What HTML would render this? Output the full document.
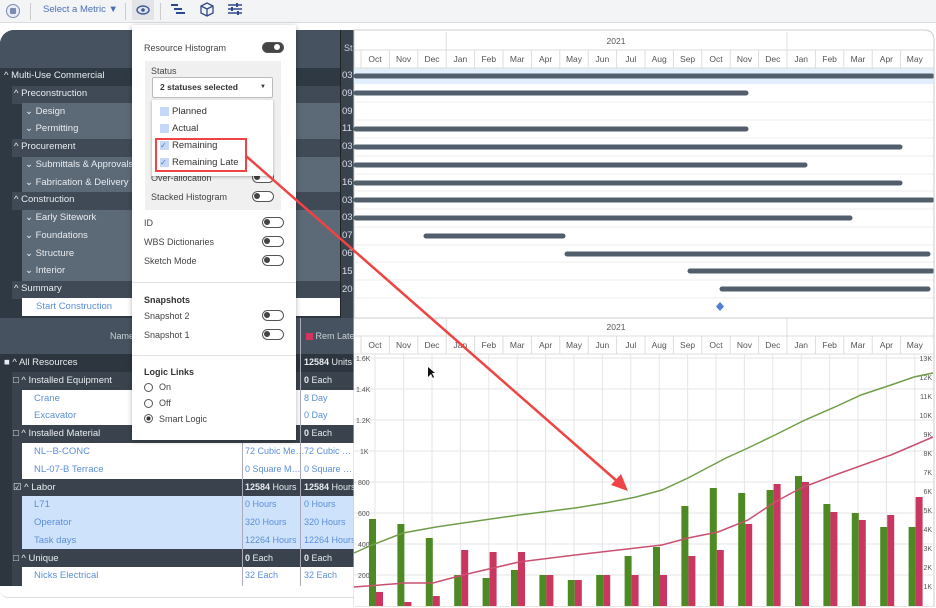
<!DOCTYPE html>
<html><head><meta charset="utf-8"><style>
*{margin:0;padding:0;box-sizing:border-box}
body{width:936px;height:608px;overflow:hidden;background:#fff;font-family:"Liberation Sans",sans-serif;position:relative;font-size:9px}
.a{position:absolute}
.tb{left:0;top:0;width:936px;height:23px;background:#f3f4f6;border-bottom:1px solid #dcdde0}
.row{position:absolute;height:17.8px;line-height:17.8px;color:#e8ecf0;white-space:nowrap;font-size:9.5px}
.lnk{color:#5b8fd8}
.tog{position:absolute;width:22px;height:11px;border-radius:6px;border:1.5px solid #555;background:#fff}
.tog:after{content:"";position:absolute;left:1px;top:1px;width:6px;height:6px;border-radius:50%;background:#444}
.tog.on{background:#444}
.tog.on:after{left:11px;background:#fff}
.pl{position:absolute;color:#444;font-size:9px}
</style></head><body>
<div class="a tb"></div>
<div class="a" style="left:6px;top:4px;width:14px;height:14px;border:1.5px solid #7b8ab0;border-radius:50%;background:#e8ecf6"></div>
<div class="a" style="left:10px;top:8px;width:6px;height:6px;background:#7b8ab0;border-radius:1px"></div>
<div class="a" style="left:30px;top:3px;width:1px;height:17px;background:#ccc"></div>
<div class="a" style="left:43px;top:4px;color:#4a6fb5;font-size:9.5px">Select a Metric &#9660;</div>
<div class="a" style="left:125px;top:3px;width:1px;height:17px;background:#ccc"></div>
<div class="a" style="left:132px;top:0;width:22px;height:20px;background:#e2e4e8"></div>
<svg class="a" style="left:136px;top:4px" width="14" height="12"><ellipse cx="7" cy="6" rx="6" ry="4" fill="none" stroke="#3a5a99" stroke-width="1.4"/><circle cx="7" cy="6" r="1.8" fill="#3a5a99"/></svg>
<div class="a" style="left:160px;top:3px;width:1px;height:17px;background:#ccc"></div>
<svg class="a" style="left:170px;top:3px" width="16" height="14"><g stroke="#2f4a8a" stroke-width="2"><line x1="1" y1="2" x2="8" y2="2"/><line x1="4" y1="6" x2="12" y2="6"/><line x1="6" y1="10" x2="15" y2="10"/></g></svg>
<svg class="a" style="left:200px;top:2px" width="14" height="15"><path d="M7 1 L13 4 L13 11 L7 14 L1 11 L1 4 Z M1 4 L7 7 L13 4 M7 7 L7 14" fill="none" stroke="#2f4a8a" stroke-width="1.3"/></svg>
<svg class="a" style="left:227px;top:2px" width="16" height="15"><g stroke="#2f4a8a" stroke-width="1.5"><line x1="1" y1="3" x2="15" y2="3"/><line x1="1" y1="7" x2="15" y2="7"/><line x1="1" y1="11" x2="15" y2="11"/></g><g fill="#2f4a8a"><rect x="9" y="1" width="2" height="4"/><rect x="4" y="5" width="2" height="4"/><rect x="10" y="9" width="2" height="4"/></g></svg>

<!-- upper left table -->
<div class="a" style="left:0;top:30px;width:355px;height:288px;background:#2f3944;border-top-left-radius:14px;overflow:hidden">
 <div class="a" style="left:0;top:0;width:340px;height:38px;background:#46525f"></div>
 <div class="a" style="left:0;top:13px;width:340px;text-align:center;color:#c9d0d8">ID - Description</div>
 <div class="a" style="left:340px;top:0;width:15px;height:288px;background:#39434e;border-left:1px solid #222"></div>
 <div class="a" style="left:344px;top:13px;color:#c9d0d8">St</div>
</div>
<div class="a" style="left:12px;top:86px;width:328px;height:18px;background:#3f4a56"></div>
<div class="a" style="left:22px;top:103px;width:318px;height:36px;background:#5c6977"></div>
<div class="a" style="left:12px;top:139px;width:328px;height:18px;background:#3f4a56"></div>
<div class="a" style="left:22px;top:157px;width:318px;height:36px;background:#5c6977"></div>
<div class="a" style="left:12px;top:192px;width:328px;height:18px;background:#3f4a56"></div>
<div class="a" style="left:22px;top:210px;width:318px;height:71px;background:#5c6977"></div>
<div class="a" style="left:12px;top:281px;width:328px;height:18px;background:#3f4a56"></div>
<div class="a" style="left:22px;top:298px;width:318px;height:18px;background:#fff"></div>
<div class="row" style="left:4px;top:67px">^ Multi-Use Commercial</div>
<div class="row" style="left:14px;top:85px">^ Preconstruction</div>
<div class="row" style="left:25px;top:103px">&#8964; Design</div>
<div class="row" style="left:25px;top:120px">&#8964; Permitting</div>
<div class="row" style="left:14px;top:138px">^ Procurement</div>
<div class="row" style="left:25px;top:156px">&#8964; Submittals &amp; Approvals</div>
<div class="row" style="left:25px;top:174px">&#8964; Fabrication &amp; Delivery</div>
<div class="row" style="left:14px;top:191px">^ Construction</div>
<div class="row" style="left:25px;top:209px">&#8964; Early Sitework</div>
<div class="row" style="left:25px;top:227px">&#8964; Foundations</div>
<div class="row" style="left:25px;top:245px">&#8964; Structure</div>
<div class="row" style="left:25px;top:262px">&#8964; Interior</div>
<div class="row" style="left:14px;top:280px">^ Summary</div>
<div class="row lnk" style="left:36px;top:298px">Start Construction</div>
<div class="a" style="left:342px;top:67px;color:#dde;line-height:17.8px;font-size:9.5px">03<br>09<br>09<br>11<br>03<br>03<br>16<br>03<br>03<br>07<br>06<br>15<br>20</div>

<!-- lower left table -->
<div class="a" style="left:0;top:318px;width:355px;height:270px;background:#2d353e"></div>
<div class="a" style="left:0;top:318px;width:355px;height:36px;background:#46525f"></div>
<div class="a" style="left:110px;top:331px;color:#c9d0d8">Name</div>
<div class="a" style="left:306px;top:331px;color:#c9d0d8"><span style="display:inline-block;width:7px;height:7px;background:#d6345f;vertical-align:-1px"></span> Rem Late</div>
<div class="a" style="left:12px;top:372px;width:343px;height:214px;background:#3a434d"></div>
<div class="a" style="left:22px;top:390px;width:333px;height:35px;background:#fff"></div>
<div class="a" style="left:22px;top:443px;width:333px;height:36px;background:#fff"></div>
<div class="a" style="left:22px;top:496px;width:333px;height:53px;background:#cfe2fb"></div>
<div class="a" style="left:22px;top:567px;width:333px;height:19px;background:#fff"></div>
<div class="a" style="left:242px;top:443px;width:1px;height:143px;background:#aab"></div>
<div class="a" style="left:300px;top:318px;width:1px;height:268px;background:#aab"></div>
<div class="a" style="left:0;top:586px;width:355px;height:12px;background:#fff;border-bottom:1px solid #ddd;border-bottom-left-radius:8px"></div>
<div class="row" style="left:4px;top:354px">&#9632; ^ All Resources</div>
<div class="row" style="left:13px;top:372px">&#9633; ^ Installed Equipment</div>
<div class="row lnk" style="left:34px;top:390px">Crane</div>
<div class="row lnk" style="left:34px;top:407px">Excavator</div>
<div class="row" style="left:13px;top:425px">&#9633; ^ Installed Material</div>
<div class="row lnk" style="left:34px;top:443px">NL--B-CONC</div>
<div class="row lnk" style="left:34px;top:461px">NL-07-B Terrace</div>
<div class="row" style="left:13px;top:479px">&#9745; ^ Labor</div>
<div class="row lnk" style="left:34px;top:496px">L71</div>
<div class="row lnk" style="left:34px;top:514px">Operator</div>
<div class="row lnk" style="left:34px;top:532px">Task days</div>
<div class="row" style="left:13px;top:550px">&#9633; ^ Unique</div>
<div class="row lnk" style="left:34px;top:567px">Nicks Electrical</div>
<div class="row lnk" style="left:245px;top:443px;font-size:9px">72 Cubic Me…</div>
<div class="row lnk" style="left:245px;top:461px;font-size:9px">0 Square M…</div>
<div class="row" style="left:245px;top:479px;font-size:9px"><b>12584</b> Hours</div>
<div class="row lnk" style="left:245px;top:496px;font-size:9px">0 Hours</div>
<div class="row lnk" style="left:245px;top:514px;font-size:9px">320 Hours</div>
<div class="row lnk" style="left:245px;top:532px;font-size:9px">12264 Hours</div>
<div class="row" style="left:245px;top:550px;font-size:9px"><b>0</b> Each</div>
<div class="row lnk" style="left:245px;top:567px;font-size:9px">32 Each</div>
<div class="row" style="left:304px;top:354px;font-size:9px"><b>12584</b> Units</div>
<div class="row" style="left:304px;top:372px;font-size:9px"><b>0</b> Each</div>
<div class="row lnk" style="left:304px;top:390px;font-size:9px">8 Day</div>
<div class="row lnk" style="left:304px;top:407px;font-size:9px">0 Day</div>
<div class="row" style="left:304px;top:425px;font-size:9px"><b>0</b> Each</div>
<div class="row lnk" style="left:304px;top:443px;font-size:9px">72 Cubic …</div>
<div class="row lnk" style="left:304px;top:461px;font-size:9px">0 Square …</div>
<div class="row" style="left:304px;top:479px;font-size:9px"><b>12584</b> Hours</div>
<div class="row lnk" style="left:304px;top:496px;font-size:9px">0 Hours</div>
<div class="row lnk" style="left:304px;top:514px;font-size:9px">320 Hours</div>
<div class="row lnk" style="left:304px;top:532px;font-size:9px">12264 Hours</div>
<div class="row" style="left:304px;top:550px;font-size:9px"><b>0</b> Each</div>
<div class="row lnk" style="left:304px;top:567px;font-size:9px">32 Each</div>

<!-- right side svg -->
<svg class="a" style="left:0;top:0" width="936" height="608" font-family="Liberation Sans" font-size="8.5">
<path d="M354 30 L924 30 Q934 30 934 40 L934 606 L354 606 Z" fill="#fff" stroke="#ccc"/>
<rect x="354" y="68" width="579" height="16" fill="#e3eefc"/>
<g stroke="#eee"><line x1="354" y1="102" x2="934" y2="102"/><line x1="354" y1="120" x2="934" y2="120"/><line x1="354" y1="138" x2="934" y2="138"/><line x1="354" y1="156" x2="934" y2="156"/><line x1="354" y1="174" x2="934" y2="174"/><line x1="354" y1="191" x2="934" y2="191"/><line x1="354" y1="209" x2="934" y2="209"/><line x1="354" y1="227" x2="934" y2="227"/><line x1="354" y1="245" x2="934" y2="245"/><line x1="354" y1="262" x2="934" y2="262"/><line x1="354" y1="280" x2="934" y2="280"/><line x1="354" y1="298" x2="934" y2="298"/></g>
<g id="hdr">
<line x1="354" y1="50" x2="934" y2="50" stroke="#ddd"/><line x1="354" y1="68" x2="934" y2="68" stroke="#ddd"/>
<line x1="446.2" y1="32" x2="446.2" y2="50" stroke="#ddd"/><line x1="787" y1="32" x2="787" y2="50" stroke="#ddd"/>
<text x="616" y="44" fill="#555" text-anchor="middle">2021</text>
<g stroke="#ddd"><line x1="361" y1="50" x2="361" y2="68"/><line x1="389.4" y1="50" x2="389.4" y2="68"/><line x1="417.8" y1="50" x2="417.8" y2="68"/><line x1="446.2" y1="50" x2="446.2" y2="68"/><line x1="474.6" y1="50" x2="474.6" y2="68"/><line x1="503" y1="50" x2="503" y2="68"/><line x1="531.4" y1="50" x2="531.4" y2="68"/><line x1="559.8" y1="50" x2="559.8" y2="68"/><line x1="588.2" y1="50" x2="588.2" y2="68"/><line x1="616.6" y1="50" x2="616.6" y2="68"/><line x1="645" y1="50" x2="645" y2="68"/><line x1="673.4" y1="50" x2="673.4" y2="68"/><line x1="701.8" y1="50" x2="701.8" y2="68"/><line x1="730.2" y1="50" x2="730.2" y2="68"/><line x1="758.6" y1="50" x2="758.6" y2="68"/><line x1="787" y1="50" x2="787" y2="68"/><line x1="815.4" y1="50" x2="815.4" y2="68"/><line x1="843.8" y1="50" x2="843.8" y2="68"/><line x1="872.2" y1="50" x2="872.2" y2="68"/><line x1="900.6" y1="50" x2="900.6" y2="68"/></g>
<g fill="#555" text-anchor="middle"><text x="375" y="62">Oct</text><text x="403.6" y="62">Nov</text><text x="432" y="62">Dec</text><text x="460.4" y="62">Jan</text><text x="488.8" y="62">Feb</text><text x="517.2" y="62">Mar</text><text x="545.6" y="62">Apr</text><text x="574" y="62">May</text><text x="602.4" y="62">Jun</text><text x="630.8" y="62">Jul</text><text x="659.2" y="62">Aug</text><text x="687.6" y="62">Sep</text><text x="716" y="62">Oct</text><text x="744.4" y="62">Nov</text><text x="772.8" y="62">Dec</text><text x="801.2" y="62">Jan</text><text x="829.6" y="62">Feb</text><text x="858" y="62">Mar</text><text x="886.4" y="62">Apr</text><text x="914.8" y="62">May</text></g>
</g>
<g stroke="#525e6c" stroke-width="5" stroke-linecap="round">
<line x1="356" y1="76" x2="932" y2="76"/><line x1="356" y1="93" x2="746" y2="93"/><line x1="356" y1="129" x2="746" y2="129"/><line x1="356" y1="147" x2="900" y2="147"/><line x1="356" y1="165" x2="805" y2="165"/><line x1="356" y1="183" x2="900" y2="183"/><line x1="356" y1="200" x2="932" y2="200"/><line x1="356" y1="218" x2="850" y2="218"/><line x1="426" y1="236" x2="563" y2="236"/><line x1="567" y1="254" x2="928" y2="254"/><line x1="690" y1="271" x2="932" y2="271"/><line x1="722" y1="289" x2="928" y2="289"/></g>
<path d="M720 302 L724 306.5 L720 311 L716 306.5 Z" fill="#4f7fd6"/>
<!-- bottom chart -->
<rect x="354" y="318" width="579" height="288" fill="#fff"/>
<line x1="354" y1="318" x2="934" y2="318" stroke="#ccc"/>
<g transform="translate(0,286)"><use href="#hdr"/></g>
<g stroke="#e6e6e6"><line x1="354" y1="358" x2="934" y2="358"/><line x1="354" y1="389" x2="934" y2="389"/><line x1="354" y1="420" x2="934" y2="420"/><line x1="354" y1="451" x2="934" y2="451"/><line x1="354" y1="482" x2="934" y2="482"/><line x1="354" y1="513" x2="934" y2="513"/><line x1="354" y1="544" x2="934" y2="544"/><line x1="354" y1="575" x2="934" y2="575"/>
<line x1="375" y1="354" x2="375" y2="606"/><line x1="403.6" y1="354" x2="403.6" y2="606"/><line x1="432" y1="354" x2="432" y2="606"/><line x1="460.4" y1="354" x2="460.4" y2="606"/><line x1="488.8" y1="354" x2="488.8" y2="606"/><line x1="517.2" y1="354" x2="517.2" y2="606"/><line x1="545.6" y1="354" x2="545.6" y2="606"/><line x1="574" y1="354" x2="574" y2="606"/><line x1="602.4" y1="354" x2="602.4" y2="606"/><line x1="630.8" y1="354" x2="630.8" y2="606"/><line x1="659.2" y1="354" x2="659.2" y2="606"/><line x1="687.6" y1="354" x2="687.6" y2="606"/><line x1="716" y1="354" x2="716" y2="606"/><line x1="744.4" y1="354" x2="744.4" y2="606"/><line x1="772.8" y1="354" x2="772.8" y2="606"/><line x1="801.2" y1="354" x2="801.2" y2="606"/><line x1="829.6" y1="354" x2="829.6" y2="606"/><line x1="858" y1="354" x2="858" y2="606"/><line x1="886.4" y1="354" x2="886.4" y2="606"/><line x1="914.8" y1="354" x2="914.8" y2="606"/></g>
<g font-size="7" fill="#555"><text x="356" y="361">1.6K</text><text x="356" y="392">1.4K</text><text x="356" y="423">1.2K</text><text x="360" y="454">1K</text><text x="358" y="485">800</text><text x="358" y="516">600</text><text x="358" y="547">400</text><text x="358" y="578">200</text>
<g text-anchor="end"><text x="932" y="361">13K</text><text x="932" y="380">12K</text><text x="932" y="399">11K</text><text x="932" y="418">10K</text><text x="932" y="437">9K</text><text x="932" y="456">8K</text><text x="932" y="475">7K</text><text x="932" y="494">6K</text><text x="932" y="513">5K</text><text x="932" y="532">4K</text><text x="932" y="551">3K</text><text x="932" y="570">2K</text><text x="932" y="589">1K</text></g></g>
<g fill="#4e8a24"><rect x="369" y="519" width="7" height="87"/><rect x="397.4" y="524" width="7" height="82"/><rect x="425.8" y="538" width="7" height="68"/><rect x="454.2" y="575" width="7" height="31"/><rect x="482.6" y="578" width="7" height="28"/><rect x="511" y="570" width="7" height="36"/><rect x="539.4" y="575" width="7" height="31"/><rect x="567.8" y="580" width="7" height="26"/><rect x="596.2" y="575" width="7" height="31"/><rect x="624.6" y="556" width="7" height="50"/><rect x="653" y="547" width="7" height="59"/><rect x="681.4" y="506" width="7" height="100"/><rect x="709.8" y="488" width="7" height="118"/><rect x="738.2" y="493" width="7" height="113"/><rect x="766.6" y="490" width="7" height="116"/><rect x="795" y="476" width="7" height="130"/><rect x="823.4" y="504" width="7" height="102"/><rect x="851.8" y="513" width="7" height="93"/><rect x="880.2" y="527" width="7" height="79"/><rect x="908.6" y="527" width="7" height="79"/></g>
<g fill="#c9365f"><rect x="376" y="592" width="7" height="14"/><rect x="404.4" y="602" width="7" height="4"/><rect x="432.8" y="596" width="7" height="10"/><rect x="461.2" y="550" width="7" height="56"/><rect x="489.6" y="552" width="7" height="54"/><rect x="518" y="552" width="7" height="54"/><rect x="546.4" y="575" width="7" height="31"/><rect x="574.8" y="580" width="7" height="26"/><rect x="603.2" y="575" width="7" height="31"/><rect x="631.6" y="575" width="7" height="31"/><rect x="660" y="575" width="7" height="31"/><rect x="688.4" y="556" width="7" height="50"/><rect x="716.8" y="550" width="7" height="56"/><rect x="745.2" y="524" width="7" height="82"/><rect x="773.6" y="484" width="7" height="122"/><rect x="802" y="482" width="7" height="124"/><rect x="830.4" y="512" width="7" height="94"/><rect x="858.8" y="520" width="7" height="86"/><rect x="887.2" y="515" width="7" height="91"/><rect x="915.6" y="497" width="7" height="109"/></g>
<polyline fill="none" stroke="#6f9e4a" stroke-width="1.5" points="354,553 372,545 403,533 436,527 463,523 519,515 575,508 606,503 636,497 662,490 688,478 726,458 748,448 775,435 805,420 835,407 861,395 891,385 914,377 933,373"/>
<polyline fill="none" stroke="#c9506f" stroke-width="1.5" points="354,587 406,583 433,583 463,575 519,562 575,555 662,545 688,538 718,532 748,520 775,502 801,488 835,475 891,455 933,437"/>
<path d="M428 367 L428 377 L431 374 L433 378 L434 377 L432 373 L435 373 Z" fill="#111"/>
<line x1="934" y1="40" x2="934" y2="606" stroke="#ccc"/>
</svg>

<!-- popup -->
<div class="a" style="left:132px;top:25px;width:164px;height:415px;background:#fff;box-shadow:0 1px 5px rgba(0,0,0,.3)"></div>
<div class="pl" style="left:144px;top:43px">Resource Histogram</div><div class="tog on" style="left:262px;top:42px"></div>
<div class="a" style="left:145px;top:61px;width:136px;height:149px;background:#f0f0f0"></div>
<div class="pl" style="left:151px;top:66px">Status</div>
<div class="a" style="left:152px;top:77px;width:121px;height:21px;background:#fff;border:1px solid #bbb;border-radius:2px;font-size:8.5px;font-weight:bold;color:#333;line-height:19px;padding-left:7px">2 statuses selected<span style="position:absolute;right:6px;font-size:6px">&#9660;</span></div>
<div class="pl" style="left:151px;top:173px">Over-allocation</div><div class="tog" style="left:252px;top:172px"></div>
<div class="pl" style="left:151px;top:192px">Stacked Histogram</div><div class="tog" style="left:252px;top:191px"></div>
<div class="a" style="left:152px;top:100px;width:121px;height:76px;background:#fff;box-shadow:0 1px 3px rgba(0,0,0,.3);font-size:9.5px;color:#333">
 <div class="a" style="left:8px;top:7px;width:9px;height:9px;background:#c5d9f7"></div><div class="a" style="left:20px;top:6px">Planned</div>
 <div class="a" style="left:8px;top:24px;width:9px;height:9px;background:#c5d9f7"></div><div class="a" style="left:20px;top:23px">Actual</div>
 <div class="a" style="left:8px;top:41px;width:9px;height:9px;background:#c5d9f7;color:#4a78c8;font-size:8px;line-height:9px">&#10003;</div><div class="a" style="left:20px;top:40px">Remaining</div>
 <div class="a" style="left:8px;top:58px;width:9px;height:9px;background:#c5d9f7;color:#4a78c8;font-size:8px;line-height:9px">&#10003;</div><div class="a" style="left:20px;top:57px">Remaining Late</div>
</div>
<div class="a" style="left:155px;top:138px;width:92px;height:34px;border:2px solid #f04343"></div>
<div class="pl" style="left:144px;top:218px">ID</div><div class="tog" style="left:262px;top:217px"></div>
<div class="pl" style="left:144px;top:237px">WBS Dictionaries</div><div class="tog" style="left:262px;top:236px"></div>
<div class="pl" style="left:144px;top:256px">Sketch Mode</div><div class="tog" style="left:262px;top:255px"></div>
<div class="a" style="left:132px;top:282px;width:164px;height:1px;background:#e2e2e2"></div>
<div class="pl" style="left:144px;top:295px;font-weight:bold;color:#333">Snapshots</div>
<div class="pl" style="left:144px;top:311px">Snapshot 2</div><div class="tog" style="left:262px;top:310px"></div>
<div class="pl" style="left:144px;top:330px">Snapshot 1</div><div class="tog" style="left:262px;top:329px"></div>
<div class="a" style="left:132px;top:355px;width:164px;height:1px;background:#e2e2e2"></div>
<div class="pl" style="left:144px;top:367px;font-weight:bold;color:#333">Logic Links</div>
<div class="a" style="left:144px;top:383px;width:9px;height:9px;border:1px solid #555;border-radius:50%"></div><div class="pl" style="left:159px;top:382px">On</div>
<div class="a" style="left:144px;top:399px;width:9px;height:9px;border:1px solid #555;border-radius:50%"></div><div class="pl" style="left:159px;top:398px">Off</div>
<div class="a" style="left:144px;top:414px;width:9px;height:9px;border:1px solid #555;border-radius:50%;background:radial-gradient(#333 40%,#fff 45%)"></div><div class="pl" style="left:159px;top:414px">Smart Logic</div>

<!-- arrow -->
<svg class="a" style="left:0;top:0" width="936" height="608"><line x1="246" y1="156" x2="618" y2="482" stroke="#f04343" stroke-width="2.5"/><path d="M628 491 L611 485 L621 474 Z" fill="#f04343"/></svg>
</body></html>
